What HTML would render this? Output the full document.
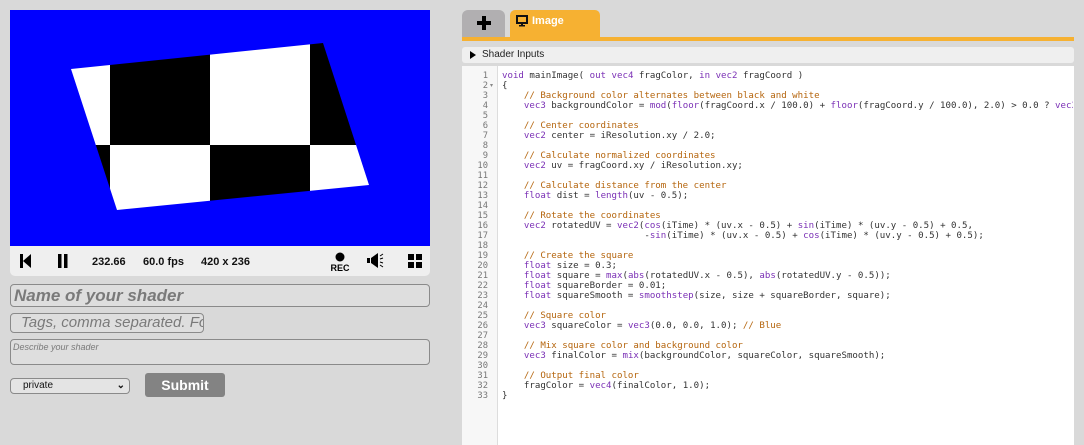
<!DOCTYPE html>
<html><head><meta charset="utf-8"><style>
*{margin:0;padding:0;box-sizing:border-box}
body{width:1084px;height:445px;background:#d9d9d9;position:relative;overflow:hidden;font-family:"Liberation Sans",sans-serif}
.abs{position:absolute}
.ctrl{left:10px;top:246px;width:420px;height:30px;background:#efefef;border-radius:0 0 5px 5px}
.ctrl b{position:absolute;top:10px;font-size:11px;color:#111}
.inp{position:absolute;border:1px solid #8a8a8a;border-radius:4px;background:#dedede;color:#7a7a7a;font-style:italic;white-space:nowrap;overflow:hidden}
.code{position:absolute;left:502px;top:71px;width:571px;overflow:hidden;font-family:"DejaVu Sans Mono",monospace;font-size:9.1px;line-height:10px;color:#333;white-space:pre}
.ln{position:absolute;left:462px;width:26px;top:71px;text-align:right;font-family:"DejaVu Sans Mono",monospace;font-size:8.8px;line-height:10px;color:#777;white-space:pre}
.k{color:#7a2fb5}.c{color:#b5650d}
</style></head><body>
<svg class="abs" style="left:10px;top:10px" width="420" height="236">
<defs><clipPath id="cp"><polygon points="61,59 313,33 359,175 107,200"/></clipPath></defs>
<rect width="420" height="236" fill="#0000ff"/>
<g clip-path="url(#cp)">
<rect x="0" y="0" width="100" height="135" fill="#fff"/>
<rect x="100" y="0" width="100" height="135" fill="#000"/>
<rect x="200" y="0" width="100" height="135" fill="#fff"/>
<rect x="300" y="0" width="120" height="135" fill="#000"/>
<rect x="0" y="135" width="100" height="101" fill="#000"/>
<rect x="100" y="135" width="100" height="101" fill="#fff"/>
<rect x="200" y="135" width="100" height="101" fill="#000"/>
<rect x="300" y="135" width="120" height="101" fill="#fff"/>
</g></svg>
<div class="abs ctrl">
<svg class="abs" style="left:10px;top:8px" width="12" height="14"><rect x="0" y="0" width="3" height="14"/><polygon points="3,7 11,0 11,14"/></svg>
<svg class="abs" style="left:47px;top:8px" width="12" height="14"><rect x="1" y="0" width="3.5" height="14"/><rect x="7" y="0" width="3.5" height="14"/></svg>
<b style="left:82px">232.66</b><b style="left:133px">60.0 fps</b><b style="left:191px">420 x 236</b>
<svg class="abs" style="left:320px;top:4px" width="22" height="24"><circle cx="10" cy="7" r="4.5"/><text x="10" y="21" font-size="9" font-weight="bold" text-anchor="middle" font-family="Liberation Sans">REC</text></svg>
<svg class="abs" style="left:357px;top:7px" width="20" height="16"><rect x="0" y="5" width="3" height="5"/><polygon points="4,5 11,0 11,15 4,10"/><path d="M13 3 L16 1 M13 6 L16 5 M13 9 L16 10 M13 12 L16 14" stroke="#000" stroke-width="1"/></svg>
<svg class="abs" style="left:398px;top:8px" width="14" height="14"><path d="M0 0H6V3H3V6H0Z M8 0H14V6H11V3H8Z M0 8H3V11H6V14H0Z M11 8H14V14H8V11H11Z"/><rect x="3" y="3" width="3" height="3"/><rect x="8" y="3" width="3" height="3"/><rect x="3" y="8" width="3" height="3"/><rect x="8" y="8" width="3" height="3"/></svg>
</div>
<div class="inp" style="left:10px;top:284px;width:420px;height:23px;font-size:17px;font-weight:bold;padding:0 3px;line-height:21px">Name of your shader</div>
<div class="inp" style="left:10px;top:313px;width:194px;height:20px;font-size:15px;padding-left:10px;line-height:18px">Tags, comma separated. Fo</div>
<div class="inp" style="left:10px;top:339px;width:420px;height:26px;font-size:9px;padding:2px 2px;line-height:11px">Describe your shader</div>
<div class="inp" style="left:10px;top:378px;width:120px;height:16px;font-style:normal;color:#111;font-size:10px;padding-left:12px;line-height:14px;background:#e4e4e4">private<span style="position:absolute;right:4px;top:0;font-weight:bold">&#8964;</span></div>
<div class="abs" style="left:145px;top:373px;width:80px;height:24px;background:#838383;border-radius:3px;color:#fff;font-weight:bold;font-size:14px;text-align:center;line-height:24px">Submit</div>

<div class="abs" style="left:462px;top:10px;width:43px;height:28px;background:#b1afb1;border-radius:6px 6px 0 0"><svg class="abs" style="left:15px;top:6px" width="14" height="14"><rect x="5" y="0" width="4" height="14"/><rect x="0" y="5" width="14" height="4"/></svg></div>
<div class="abs" style="left:510px;top:10px;width:90px;height:28px;background:#f6b132;border-radius:5px 5px 0 0;color:#fff;font-weight:bold;font-size:11px;line-height:22px;padding-left:22px">Image<svg class="abs" style="left:6px;top:5px" width="12" height="12"><rect x="1" y="1" width="10" height="7" fill="none" stroke="#111" stroke-width="2"/><rect x="5" y="8" width="2" height="2" fill="#111"/><rect x="3" y="10" width="6" height="1.5" fill="#111"/></svg></div>
<div class="abs" style="left:462px;top:37px;width:612px;height:4px;background:#f6b132"></div>
<div class="abs" style="left:462px;top:47px;width:612px;height:16px;background:#efefef;border-radius:3px;font-size:10px;line-height:16px;padding-left:20px;color:#222">Shader Inputs<svg class="abs" style="left:8px;top:4px" width="6" height="8"><polygon points="0,0 6,4 0,8"/></svg></div>
<div class="abs" style="left:462px;top:66px;width:612px;height:379px;background:#fff"></div>
<div class="abs" style="left:462px;top:66px;width:36px;height:379px;background:#f7f7f7;border-right:1px solid #ddd"></div>
<div class="ln">1
2
3
4
5
6
7
8
9
10
11
12
13
14
15
16
17
18
19
20
21
22
23
24
25
26
27
28
29
30
31
32
33</div>
<div class="abs" style="left:490px;top:82px;font-size:6px;color:#888">&#9662;</div>
<div class="code"><span class="k">void</span> mainImage( <span class="k">out</span> <span class="k">vec4</span> fragColor, <span class="k">in</span> <span class="k">vec2</span> fragCoord )
{
    <span class="c">// Background color alternates between black and white</span>
    <span class="k">vec3</span> backgroundColor = <span class="k">mod</span>(<span class="k">floor</span>(fragCoord.x / 100.0) + <span class="k">floor</span>(fragCoord.y / 100.0), 2.0) &gt; 0.0 ? <span class="k">vec3</span>(1.0) : vec3(0.0);

    <span class="c">// Center coordinates</span>
    <span class="k">vec2</span> center = iResolution.xy / 2.0;

    <span class="c">// Calculate normalized coordinates</span>
    <span class="k">vec2</span> uv = fragCoord.xy / iResolution.xy;

    <span class="c">// Calculate distance from the center</span>
    <span class="k">float</span> dist = <span class="k">length</span>(uv - 0.5);

    <span class="c">// Rotate the coordinates</span>
    <span class="k">vec2</span> rotatedUV = <span class="k">vec2</span>(<span class="k">cos</span>(iTime) * (uv.x - 0.5) + <span class="k">sin</span>(iTime) * (uv.y - 0.5) + 0.5,
                          -<span class="k">sin</span>(iTime) * (uv.x - 0.5) + <span class="k">cos</span>(iTime) * (uv.y - 0.5) + 0.5);

    <span class="c">// Create the square</span>
    <span class="k">float</span> size = 0.3;
    <span class="k">float</span> square = <span class="k">max</span>(<span class="k">abs</span>(rotatedUV.x - 0.5), <span class="k">abs</span>(rotatedUV.y - 0.5));
    <span class="k">float</span> squareBorder = 0.01;
    <span class="k">float</span> squareSmooth = <span class="k">smoothstep</span>(size, size + squareBorder, square);

    <span class="c">// Square color</span>
    <span class="k">vec3</span> squareColor = <span class="k">vec3</span>(0.0, 0.0, 1.0); <span class="c">// Blue</span>

    <span class="c">// Mix square color and background color</span>
    <span class="k">vec3</span> finalColor = <span class="k">mix</span>(backgroundColor, squareColor, squareSmooth);

    <span class="c">// Output final color</span>
    fragColor = <span class="k">vec4</span>(finalColor, 1.0);
}</div>
</body></html>
